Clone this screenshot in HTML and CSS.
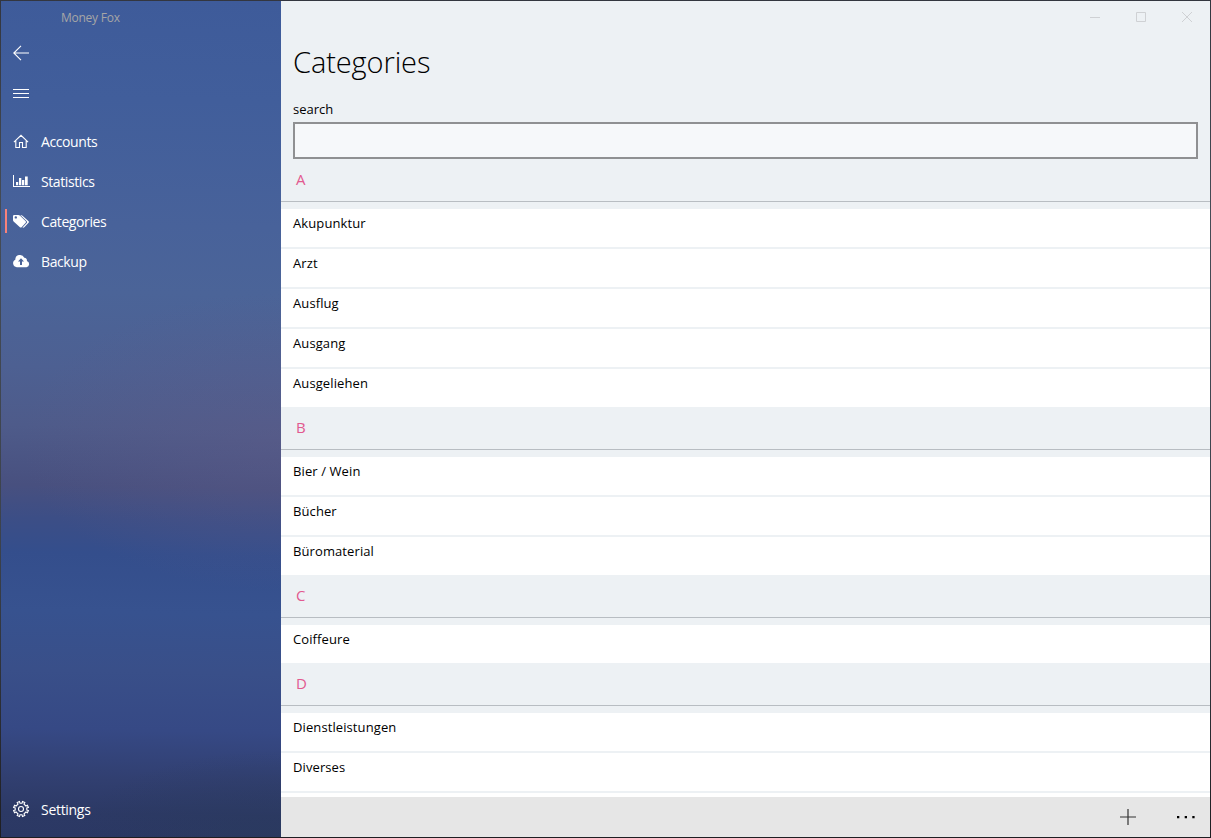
FILE: index.html
```html
<!DOCTYPE html>
<html lang="en">
<head>
<meta charset="utf-8">
<title>Money Fox</title>
<link rel="stylesheet" href="styles.css">
</head>
<body>
<div class="window">
  <aside class="sidebar">
    <div class="app-title">Money Fox</div>
    <div class="nav-button"><svg class="icon" viewBox="0 0 16 16"><path class="line" d="M16 8H.8M8 .8.8 8 8 15.2"/></svg></div>
    <div class="nav-button"><svg class="icon" viewBox="0 0 16 16"><path class="line crisp" d="M0 4.5h16M0 8.5h16M0 12.5h16"/></svg></div>
    <nav class="menu">
      <div class="item"><svg class="icon" viewBox="0 0 16 16"><path class="line" d="M.9 9.100 8 2.300l7.100 6.800M2.800 7.500v7h3.700V9.500h3v5h3.700v-7"/></svg><span>Accounts</span></div>
      <div class="item"><svg class="icon wide" viewBox="0 0 17 16"><path class="solid" d="M0 2h1v11h16v1H0zM3 9h2.200v3.200H3zM6 5h2.300v7.200H6zM9 7h2.300v5.200H9zM12 3.500h2.700v8.700H12z"/></svg><span>Statistics</span></div>
      <div class="item active"><svg class="icon" viewBox="0 0 16 16"><path class="solid" fill-rule="evenodd" d="M0 3.200Q0 2 1.200 2h4q1.100 0 1.900.7l5.600 5.500q.8.800 0 1.600l-4.100 4.400q-.8.800-1.700 0L.9 8.800Q0 8 0 7zm1.600 1.200a1.200 1.200 0 1 0 2.400 0 1.200 1.200 0 1 0-2.400 0M7.300 2q1.400 0 2.200.7l6.100 5.500q.8.800 0 1.600l-4.300 4.400q-.8.800-1.800.3l4.200-4.400q.9-.9 0-1.900z"/></svg><span>Categories</span></div>
      <div class="item"><svg class="icon wide" viewBox="0 0 17 16"><path class="solid" fill-rule="evenodd" d="M3.800 14.200A3.900 3.900 0 0 1 2.300 6.800 4.700 4.700 0 0 1 11.300 4.800a2.600 2.600 0 0 1 2.600 3.200A3.200 3.200 0 0 1 13.500 14.200zM8 5.300 5 8.600h2V12h2V8.600h2z"/></svg><span>Backup</span></div>
    </nav>
    <div class="item settings"><svg class="icon" viewBox="0 0 16 16"><path class="line" d="M6.500.6 7 2.200h2L9.500.6l2.300 1-.8 1.500L12.900 5l1.500-.8 1 2.300-1.600.5v2l1.600.5-1 2.300-1.500-.8-1.900 1.900.8 1.500-2.300 1L9 13.800H7l-.5 1.600-2.300-1 .8-1.500L3.100 11l-1.500.8-1-2.300L2.200 9V7L.6 6.500l1-2.300 1.500.8L5 3.100l-.8-1.500z"/><circle class="line" cx="8" cy="8" r="2.500"/></svg><span>Settings</span></div>
  </aside>
  <main class="content">
    <div class="caption">
      <svg class="cap" viewBox="0 0 10 10"><path d="M0 5.500h10"/></svg>
      <svg class="cap" viewBox="0 0 10 10"><path d="M.5.500h9v9h-9z"/></svg>
      <svg class="cap" viewBox="0 0 10 10"><path d="m0 0 10 10M10 0 0 10"/></svg>
    </div>
    <h1>Categories</h1>
    <label class="search-label" for="search">search</label>
    <input class="search" id="search" type="text">
    <div class="list">
      <h2>A</h2>
      <ul><li>Akupunktur</li><li>Arzt</li><li>Ausflug</li><li>Ausgang</li><li>Ausgeliehen</li></ul>
      <h2>B</h2>
      <ul><li>Bier / Wein</li><li>Bücher</li><li>Büromaterial</li></ul>
      <h2>C</h2>
      <ul><li>Coiffeure</li></ul>
      <h2>D</h2>
      <ul><li>Dienstleistungen</li><li>Diverses</li><li></li></ul>
    </div>
    <footer class="commands">
      <svg class="plus" viewBox="0 0 16 16"><path d="M8 0v16M0 8h16"/></svg>
      <svg class="more" viewBox="0 0 20 4"><path d="M1 1h2.300v2.300H1zM8.700 1H11v2.300H8.700zM16.300 1h2.300v2.300h-2.300z"/></svg>
    </footer>
  </main>
</div>
</body>
</html>
```
FILE: styles.css
```css
* { box-sizing: border-box; }
body {
  margin: 0;
  height: 838px;
  overflow: hidden;
  padding: 1px;
  background: linear-gradient(#33363f, #454c56 25%, #3c424c 65%, #1e1e22);
  font-family: "Open Sans", "Noto Sans", sans-serif;
  font-size: 13px;
  color: #000;
}
.window { display: flex; height: 836px; }
.sidebar {
  width: 280px;
  display: flex;
  flex-direction: column;
  color: #fff;
  background:
    radial-gradient(ellipse 260px 150px at 280px 440px, rgba(98, 92, 136, .4), transparent),
    radial-gradient(ellipse 200px 90px at 270px 840px, rgba(42, 58, 92, .6), transparent),
    linear-gradient(181deg, #3e5b9a 0%, #415e9b 12%, #48629a 27%, #4b6498 35%, #4d6092 44%, #4e5b8a 51%, #48507f 58%, #3c4e86 62%, #344e8c 66%, #37528f 73%, #394f89 80%, #364985 87%, #313f70 93%, #2c3965 97%, #2b3864 100%);
}
.app-title { height: 32px; padding-left: 60px; line-height: 33px; font-size: 12px; color: #a6a6a6; letter-spacing: -.25px; }
.nav-button { height: 40px; padding: 12px; }
.icon { display: block; width: 16px; height: 16px; flex: none; overflow: visible; }
.wide { width: 17px; margin-right: -1px; }
.line { fill: none; stroke: #fff; stroke-width: 1.1; }
.crisp { stroke-width: 1; shape-rendering: crispEdges; }
.solid { fill: #fff; }
.menu { padding-top: 8px; }
.item { display: flex; align-items: center; gap: 12px; height: 40px; padding: 0 12px; font-size: 14px; letter-spacing: -.4px; }
.active { padding-left: 4px; }
.active::before { content: ""; width: 2px; height: 24px; background: #f8827a; margin-right: -6px; }
.settings { margin-top: auto; margin-bottom: 8px; letter-spacing: -.3px; }
.content { flex: 1; min-width: 0; display: flex; flex-direction: column; background: #edf1f4; }
.caption { display: flex; justify-content: flex-end; gap: 36px; height: 32px; padding: 11px 18px 0 0; }
.cap { width: 10px; height: 10px; fill: none; stroke: #cfd1d4; stroke-width: 1; }
h1 { margin: 0; padding-left: 12px; height: 66px; line-height: 57px; font-size: 29px; font-weight: 300; letter-spacing: -.1px; }
.search-label { height: 22px; padding-left: 12px; line-height: 20px; }
.search { display: block; height: 37px; margin: 1px 12px 0; padding: 0 10px; border: 2px solid #8f9092; border-radius: 0; background: #f6f8fa; outline: 0; font: inherit; }
.list { flex: 1; min-height: 0; overflow: hidden; }
h2 { margin: 0 0 7px; padding-left: 15px; height: 43px; line-height: 41px; border-bottom: 1px solid #b8bdc2; font-size: 15px; font-weight: 400; color: #e2598f; }
ul { margin: 0; padding: 0; list-style: none; display: flex; flex-direction: column; gap: 2px; }
li { height: 38px; padding-left: 12px; line-height: 29px; background: #fff; letter-spacing: .1px; }
.commands { display: flex; align-items: center; justify-content: flex-end; gap: 40px; height: 40px; padding-right: 14px; background: #e6e6e6; }
.plus { width: 16px; height: 16px; fill: none; stroke: #333; stroke-width: 1.2; }
.more { width: 20px; height: 4px; fill: #000; }
```
